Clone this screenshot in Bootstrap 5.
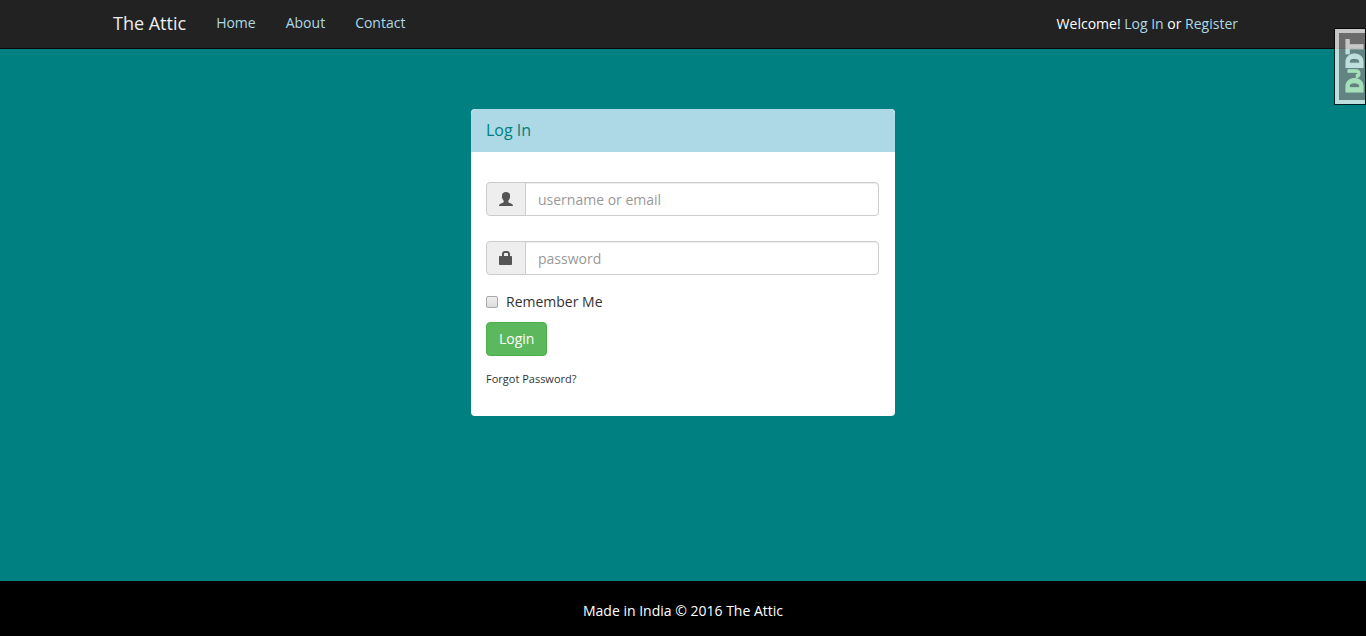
<!DOCTYPE html>
<html lang="en">
<head>
<meta charset="utf-8">
<meta name="viewport" content="width=device-width, initial-scale=1">
<title>The Attic - Log In</title>
<link href="https://cdn.jsdelivr.net/npm/bootstrap@5.3.0/dist/css/bootstrap.min.css" rel="stylesheet">
<style>
  body { background: #008080; color: #333; font-family: "Open Sans", sans-serif; font-size: 14px; line-height: 20px; }
  a { text-decoration: none; }
  .site-width { max-width: 1170px; padding: 0 15px; }
  .site-nav { background: #222; border-bottom: 1px solid #080808; padding: 0; min-height: 49px; color: #fff; }
  .site-nav .navbar-brand { color: #eee; font-size: 18px; line-height: 20px; margin-right: 15px; padding: 0 0 2px; }
  .site-nav .navbar-nav .nav-link { color: lightblue; padding: 0 15px 2px; }
  .site-nav .navbar-nav .nav-link:hover, .account a:hover { color: #fff; }
  .account { padding-right: 15px; }
  .account a { color: lightblue; }
  .login-panel { width: 100%; max-width: 424px; margin: 60px auto; border: 0; border-radius: 4px; overflow: hidden; }
  .login-panel .card-header { background: lightblue; color: #008080; font-size: 16px; line-height: 22px; padding: 10px 15px 11px; border: 0; }
  .login-panel h1 { font: inherit; margin: 0; }
  .login-panel .card-body { padding: 30px 16px 27px 15px; }
  .login-panel .input-group { margin-bottom: 25px; }
  .login-panel .input-group + .input-group { margin-bottom: 17px; }
  .input-group-text { background: #eee; border-color: #ccc; border-radius: 4px; padding: 0 12px; width: 40px; color: #555; }
  .login-panel .form-control { height: 34px; padding: 6px 12px; border-color: #ccc; border-radius: 4px; font-size: 14px; line-height: 20px; box-shadow: inset 0 1px 1px rgba(0,0,0,.075); }
  .form-control::placeholder { color: #999; }
  .remember { gap: 8px; margin-bottom: 10px; }
  .remember .form-check-input { width: 12px; height: 12px; margin: 0; border: 1px solid #aaa; border-radius: 2px; background-color: #e4e4e4; background-image: linear-gradient(#eee, #dcdcdc); }
  .remember .form-check-input:checked { background-color: #337ab7; }
  .btn-login { background: #5cb85c; border-color: #4cae4c; color: #fff; font-size: 14px; line-height: 20px; padding: 6px 12px; border-radius: 4px; }
  .btn-login:hover { background: #449d44; color: #fff; }
  .forgot { color: #333; font-size: 11px; line-height: 20px; margin-top: 13px; }
  .site-footer { background: #000; color: #fff; padding: 20px 15px 15px; }
  .debug-handle { position: fixed; top: 28px; right: 0; z-index: 1040; width: 32px; height: 77px; padding: 0 0 0 9px; background: #858585; border: 1px solid #000; box-shadow: inset 4px 0 #fff, inset 0 4px #fff, inset 0 -4px #fff; opacity: .75; color: #fff; }
  .debug-handle span { writing-mode: vertical-rl; transform: rotate(180deg); font: 900 24px/30px Roboto, sans-serif; -webkit-text-stroke: 1px currentColor; }
  .debug-handle b { color: #dfc; font-weight: 900; }
  .debug-handle small { font-size: 16px; }
</style>
</head>
<body class="d-flex flex-column min-vh-100">
<nav class="navbar navbar-expand site-nav">
  <div class="container site-width">
    <a class="navbar-brand" href="#">The Attic</a>
    <ul class="navbar-nav me-auto">
      <li class="nav-item"><a class="nav-link" href="#">Home</a></li>
      <li class="nav-item"><a class="nav-link" href="#">About</a></li>
      <li class="nav-item"><a class="nav-link" href="#">Contact</a></li>
    </ul>
    <div class="account">Welcome! <a href="#">Log In</a> or <a href="#">Register</a></div>
  </div>
</nav>

<button class="debug-handle d-flex align-items-center justify-content-center" type="button" title="Show toolbar"><span><b>D<small>J</small></b>DT</span></button>

<main class="container site-width flex-grow-1">
  <section class="card login-panel">
    <div class="card-header"><h1>Log In</h1></div>
    <form class="card-body">
      <div class="input-group">
        <label class="input-group-text" for="username" aria-label="Username or email">
          <svg width="15" height="14" viewBox="0 0 14 14" preserveAspectRatio="none" fill="currentColor" aria-hidden="true"><path d="M7 0C4.500 0 3 1.300 3 3.500c0 .500 0 .800.100 1.200-.4.200-.3 1.500.3 1.800.2 1 .7 1.700 1.300 2.200V10c-.3.700-1.100.800-2.100 1.200C.9 11.800 0 12.500 0 14h14c0-1.500-.9-2.200-2.600-2.800-1-.4-1.800-.5-2.100-1.200V8.700c.6-.5 1.100-1.200 1.300-2.200.6-.3.7-1.600.3-1.800.1-.4.100-.7.100-1.200C11 1.300 9.500 0 7 0z"/></svg>
        </label>
        <input class="form-control" id="username" type="text" placeholder="username or email">
      </div>
      <div class="input-group">
        <label class="input-group-text" for="password" aria-label="Password">
          <svg width="14" height="14" viewBox="0 0 14 14" fill="currentColor" aria-hidden="true"><path fill-rule="evenodd" d="M3 5V3c0-1.800 1.200-3 3-3h2c1.800 0 3 1.200 3 3v2h1.200c.5 0 .8.300.8.800v7.400c0 .5-.3.800-.8.800H.8c-.5 0-.8-.3-.8-.8V5.800C0 5.300.3 5 .8 5zM5 5h4V3c0-.6-.4-1-1-1H6c-.6 0-1 .4-1 1z"/></svg>
        </label>
        <input class="form-control" id="password" type="password" placeholder="password">
      </div>
      <div class="remember d-flex align-items-center">
        <input class="form-check-input" id="remember" type="checkbox">
        <label for="remember">Remember Me</label>
      </div>
      <button class="btn btn-login" type="submit">Login</button>
      <div><a class="forgot d-inline-block" href="#">Forgot Password?</a></div>
    </form>
  </section>
</main>

<footer class="site-footer text-center">Made in India © 2016 The Attic</footer>
<script src="https://cdn.jsdelivr.net/npm/bootstrap@5.3.0/dist/js/bootstrap.bundle.min.js"></script>
</body>
</html>
